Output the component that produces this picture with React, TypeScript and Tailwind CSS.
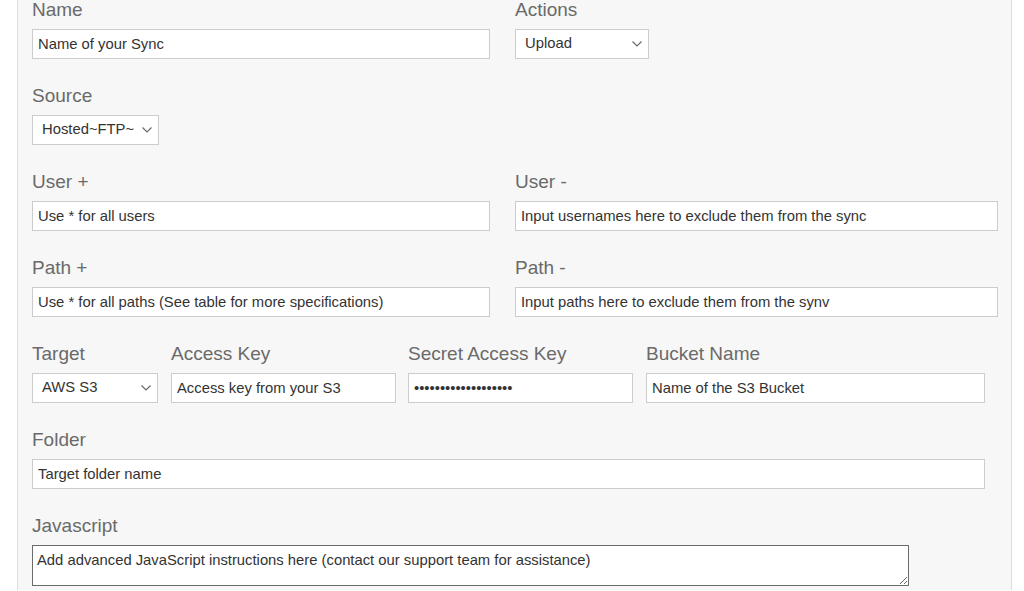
import React from "react";

const font = { fontFamily: '"Liberation Sans", Arial, Helvetica, sans-serif' };

function Label({ children }: { children: React.ReactNode }) {
  return (
    <div className="text-[19px] leading-[22px] text-[#6a6a6a] mb-[8px] whitespace-nowrap">
      {children}
    </div>
  );
}

function TextField({
  label,
  value,
  width,
  type = "text",
}: {
  label: string;
  value: string;
  width: string;
  type?: string;
}) {
  return (
    <div className={width}>
      <Label>{label}</Label>
      <input
        type={type}
        defaultValue={value}
        readOnly
        className="block w-full h-[30px] border border-[#cccccc] bg-white px-[5px] pb-[1px] text-[14.8px] text-[#333333] outline-none"
        style={font}
      />
    </div>
  );
}

function Chevron() {
  return (
    <svg
      className="pointer-events-none absolute right-[7px] top-[12px]"
      width="10"
      height="6"
      viewBox="0 0 10 6"
      fill="none"
    >
      <polyline points="0.5,0.5 5,5 9.5,0.5" stroke="#666666" strokeWidth="1.1" />
    </svg>
  );
}

function SelectField({
  label,
  value,
  width,
}: {
  label: string;
  value: string;
  width: string;
}) {
  return (
    <div className={width}>
      <Label>{label}</Label>
      <div className="relative h-[30px]">
        <select
          defaultValue={value}
          className="block w-full h-full appearance-none border border-[#cccccc] bg-white pl-[9px] pr-6 pb-[1px] text-[14.8px] text-[#333333] outline-none"
          style={font}
        >
          <option>{value}</option>
        </select>
        <Chevron />
      </div>
    </div>
  );
}

export default function App() {
  return (
    <div className="h-[591px] w-[1024px] overflow-hidden bg-white" style={font}>
      <div className="ml-[17px] mr-[12px] h-full border-x border-[#dedede] bg-[#f7f7f7] pl-[14px]">
        <div className="-mt-[1px] flex flex-col gap-[26px]">
          <div className="flex gap-[25px]">
            <TextField label="Name" value="Name of your Sync" width="w-[458px]" />
            <SelectField label="Actions" value="Upload" width="w-[134px]" />
          </div>

          <div className="flex">
            <SelectField label="Source" value="Hosted~FTP~" width="w-[127px]" />
          </div>

          <div className="flex gap-[25px]">
            <TextField label="User +" value="Use * for all users" width="w-[458px]" />
            <TextField
              label="User -"
              value="Input usernames here to exclude them from the sync"
              width="w-[483px]"
            />
          </div>

          <div className="flex gap-[25px]">
            <TextField
              label="Path +"
              value="Use * for all paths (See table for more specifications)"
              width="w-[458px]"
            />
            <TextField
              label="Path -"
              value="Input paths here to exclude them from the synv"
              width="w-[483px]"
            />
          </div>

          <div className="flex">
            <SelectField label="Target" value="AWS S3" width="w-[126px]" />
            <div className="ml-[13px]">
              <TextField label="Access Key" value="Access key from your S3" width="w-[225px]" />
            </div>
            <div className="ml-[12px]">
              <TextField
                label="Secret Access Key"
                value="secretaccesskey1234"
                type="password"
                width="w-[225px]"
              />
            </div>
            <div className="ml-[13px]">
              <TextField label="Bucket Name" value="Name of the S3 Bucket" width="w-[339px]" />
            </div>
          </div>

          <div className="flex">
            <TextField label="Folder" value="Target folder name" width="w-[953px]" />
          </div>

          <div className="w-[877px]">
            <Label>Javascript</Label>
            <textarea
              readOnly
              defaultValue="Add advanced JavaScript instructions here (contact our support team for assistance)"
              className="block w-full h-[41px] border border-[#6b6b6b] bg-white px-[4px] pt-[5px] pb-[2px] text-[14.8px] leading-[18px] text-[#333333] outline-none"
              style={font}
            />
          </div>
        </div>
      </div>
    </div>
  );
}
